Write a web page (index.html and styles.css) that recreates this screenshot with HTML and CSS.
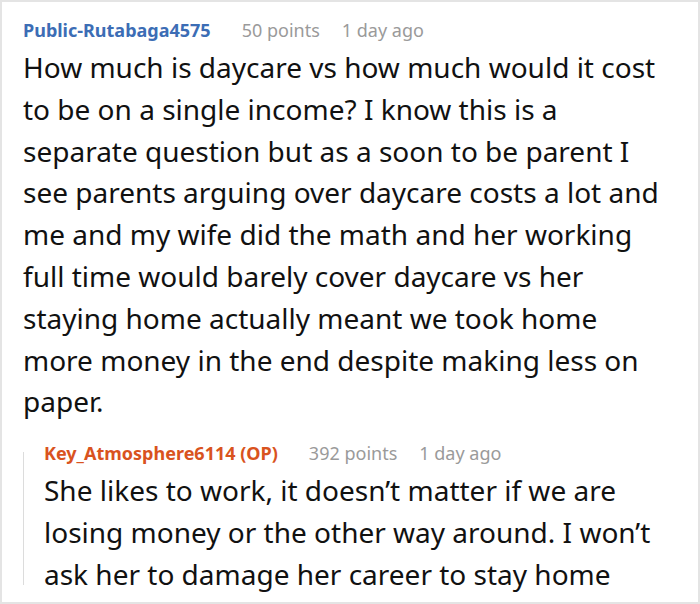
FILE: index.html
```html
<!DOCTYPE html>
<html>
<head>
<meta charset="utf-8">
<link rel="stylesheet" href="styles.css">
</head>
<body>
<div class="frame">
  <div class="comment">
    <div class="meta">
      <span class="author">Public-Rutabaga4575</span>
      <span class="points">50 points</span>
      <span class="time">1 day ago</span>
    </div>
    <p class="text">How much is daycare vs how much would it cost to be on a single income? I know this is a separate question but as a soon to be parent I see parents arguing over daycare costs a lot and me and my wife did the math and her working full time would barely cover daycare vs her staying home actually meant we took home more money in the end despite making less on paper.</p>
    <div class="reply">
      <div class="meta">
        <span class="author op">Key_Atmosphere6114 (OP)</span>
        <span class="points">392 points</span>
        <span class="time">1 day ago</span>
      </div>
      <p class="text">She likes to work, it doesn’t matter if we are losing money or the other way around. I won’t ask her to damage her career to stay home</p>
    </div>
  </div>
</div>
</body>
</html>
```

FILE: styles.css
```css
html, body {
  margin: 0;
  padding: 0;
  background: #fff;
}
.frame {
  width: 700px;
  height: 604px;
  box-sizing: border-box;
  border: 2px solid #e4e4e4;
  overflow: hidden;
  font-family: "Noto Sans", "Open Sans", sans-serif;
  color: #111;
}
.comment {
  padding: 16px 33px 0 21px;
}
.meta {
  display: flex;
  font-size: 18px;
  line-height: 24px;
}
.author {
  font-weight: 700;
  color: #3c6db5;
  margin-right: 31px;
}
.points {
  margin-right: 22px;
}
.author.op {
  color: #d9531e;
}
.points, .time {
  color: #9a9a9a;
}
.text {
  margin: 0;
  font-size: 28px;
  line-height: 41.8px;
  padding-top: 5px;
}
.reply {
  margin-top: 18px;
  padding-left: 21px;
  background: linear-gradient(#dcdcdc, #dcdcdc) 0 11px / 1px calc(100% - 22px) no-repeat;
}
```
